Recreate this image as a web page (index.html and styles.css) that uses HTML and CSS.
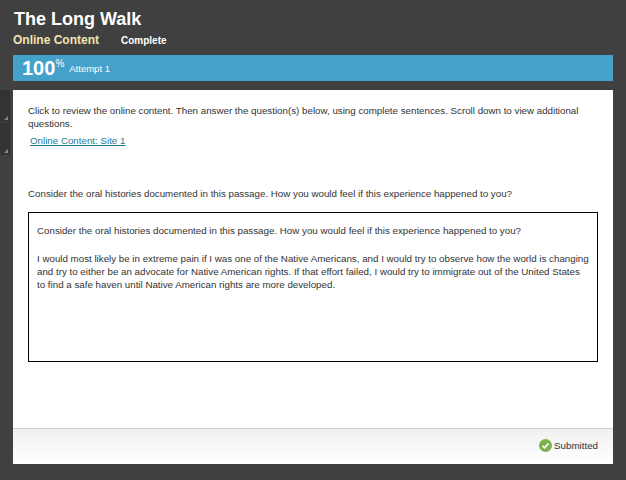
FILE: index.html
```html
<!DOCTYPE html>
<html lang="en">
<head>
    <meta charset="UTF-8">
    <meta name="viewport" content="width=device-width, initial-scale=1.0">
    <title>The Long Walk</title>
    <link rel="stylesheet" href="styles.css">
</head>
<body>

    <header class="page-header">
        <h1>The Long Walk</h1>
        <div class="subtitle">
            <span class="activity">Online Content</span>
            <span class="status">Complete</span>
        </div>
    </header>

    <div class="score-bar">
        <span class="score">100<sup>%</sup></span>
        <span class="attempt">Attempt 1</span>
    </div>

    <div class="main-row">
        <div class="side-tabs">
            <div class="side-tab"></div>
            <div class="side-tab"></div>
        </div>

        <section class="card">
            <div class="card-body">
                <p class="instructions">Click to review the online content. Then answer the question(s) below, using complete sentences. Scroll down to view additional questions.</p>
                <a class="content-link" href="#">Online Content: Site 1</a>
                <p class="question">Consider the oral histories documented in this passage. How you would feel if this experience happened to you?</p>
                <div class="answer">
                    <p>Consider the oral histories documented in this passage. How you would feel if this experience happened to you?</p>
                    <p>I would most likely be in extreme pain if I was one of the Native Americans, and I would try to observe how the world is changing and try to either be an advocate for Native American rights. If that effort failed, I would try to immigrate out of the United States to find a safe haven until Native American rights are more developed.</p>
                </div>
            </div>
            <footer class="card-footer">
                <svg class="check-icon" width="13" height="13" viewBox="0 0 13 13">
                    <circle cx="6.5" cy="6.5" r="6.5" fill="#7cb24c"/>
                    <path d="M3.6 6.8 L5.6 8.8 L9.4 4.6" fill="none" stroke="#fff" stroke-width="1.8"/>
                </svg>
                <span>Submitted</span>
            </footer>
        </section>
    </div>

</body>
</html>
```

FILE: styles.css
```css
body {
    font-family: 'Liberation Sans', Arial, sans-serif;
    margin: 0;
    padding: 0;
    height: 480px;
    overflow: hidden;
    background-color: #404040;
    color: #333;
}

.page-header {
    padding: 9px 13px 0;
    height: 55px;
    box-sizing: border-box;
}

.page-header h1 {
    margin: 0 0 0 1px;
    font-size: 18px;
    line-height: 20px;
    font-weight: bold;
    color: #fff;
}

.subtitle {
    display: flex;
    align-items: baseline;
    gap: 22px;
    margin-top: 4px;
}

.activity {
    font-size: 12px;
    font-weight: bold;
    color: #f2e3b0;
}

.status {
    font-size: 10px;
    font-weight: bold;
    color: #fff;
}

.score-bar {
    display: flex;
    align-items: center;
    height: 26px;
    margin: 0 13px;
    padding-left: 9px;
    background-color: #44a1c9;
    color: #fff;
}

.score {
    font-size: 20px;
    font-weight: bold;
    line-height: 26px;
}

.score sup {
    font-size: 10px;
    font-weight: normal;
    line-height: 0;
    vertical-align: 8px;
}

.attempt {
    margin-left: 5px;
    font-size: 9.5px;
}

.main-row {
    display: flex;
    margin-top: 9px;
}

.side-tabs {
    width: 10px;
    margin-right: 3px;
}

.side-tab {
    position: relative;
    height: 32px;
    margin-bottom: 1px;
    background-color: #333;
}

/* little grey corner on each tab */
.side-tab::after {
    content: "";
    position: absolute;
    right: 2px;
    bottom: 2px;
    border-left: 4px solid transparent;
    border-bottom: 4px solid #888;
}

.card {
    width: 600px;
    height: 374px;
    display: flex;
    flex-direction: column;
    background-color: #fff;
}

.card-body {
    flex: 1;
    padding: 14px 15px 0;
    font-size: 9.75px;
    line-height: 13px;
}

.instructions {
    margin: 0;
}

.content-link {
    display: inline-block;
    margin: 4px 0 0 2px;
    font-size: 9.75px;
    color: #1c7a96;
}

.question {
    margin: 40px 0 0;
}

.answer {
    height: 150px;
    box-sizing: border-box;
    margin-top: 12px;
    padding: 11px 8px;
    border: 1px solid #000;
}

.answer p {
    margin: 0 0 15px;
}

.card-footer {
    display: flex;
    align-items: center;
    justify-content: flex-end;
    gap: 2px;
    height: 36px;
    box-sizing: border-box;
    padding: 0 15px 3px 0;
    border-top: 1px solid #ccc;
    background: linear-gradient(#f0f0f0, #fff);
    font-size: 9.75px;
}
```
